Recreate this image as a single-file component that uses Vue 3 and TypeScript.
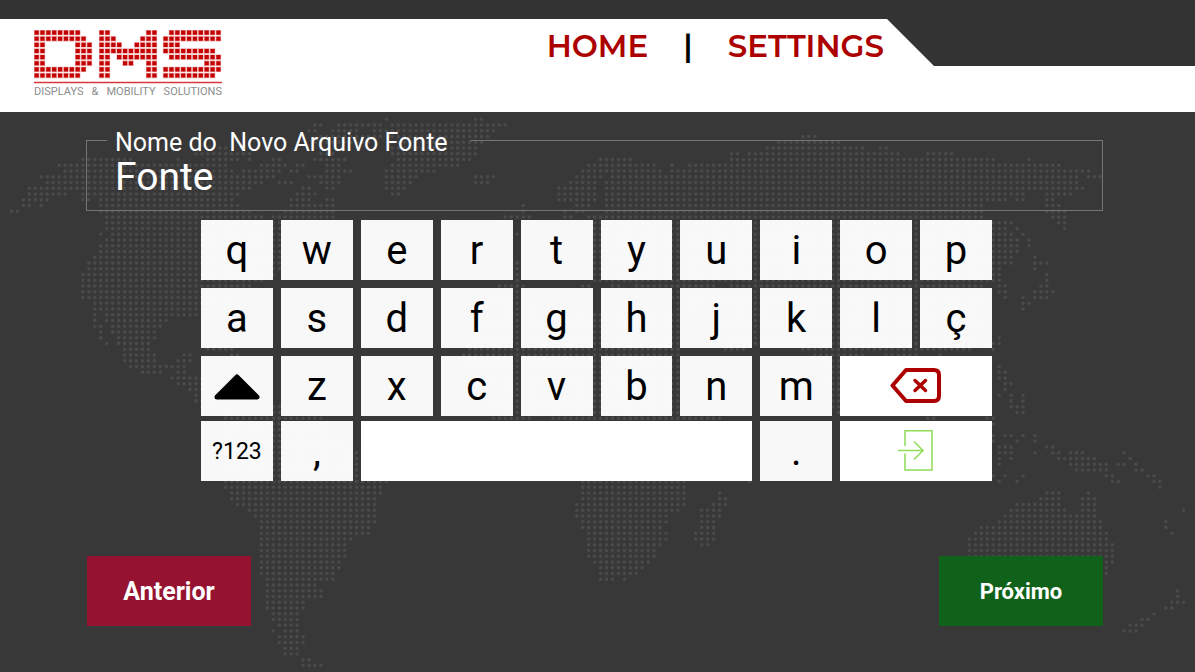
<script setup lang="ts">
import { ref } from 'vue'

type Key = { id: string; label?: string; span?: number; kind?: 'small' | 'space' | 'shift' | 'delete' | 'enter' }

const fileName = ref('Fonte')
const upper = ref(false)

const letters = (text: string): Key[] => [...text].map((c) => ({ id: c, label: c }))

const rows: Key[][] = [
  letters('qwertyuiop'),
  letters('asdfghjklç'),
  [{ id: 'Shift', kind: 'shift' }, ...letters('zxcvbnm'), { id: 'Apagar', kind: 'delete', span: 2 }],
  [
    { id: '?123', label: '?123', kind: 'small' },
    { id: ',', label: ',' },
    { id: 'Espaço', kind: 'space', span: 5 },
    { id: '.', label: '.' },
    { id: 'Enter', kind: 'enter', span: 2 },
  ],
]

function press(key: Key) {
  if (key.kind === 'shift') upper.value = !upper.value
  else if (key.kind === 'delete') fileName.value = fileName.value.slice(0, -1)
  else if (key.kind === 'space') fileName.value += ' '
  else if (!key.kind && key.label) fileName.value += upper.value ? key.label.toUpperCase() : key.label
}

// World map: one entry per dot row, each a list of column runs.
const mapRows: string[] = [
  '63 78-79',
  '51-52 55-62 64-83',
  '50-51 54-58 61-81',
  '52-62 64-80 133-135',
  '51-60 64-79 129-139',
  '35-36 64-78 127-143 146-147',
  '31-40 52-54 64-78 121-122 124-149 154-158',
  '12-20 28 33-38 40 44-45 51-56 65-77 99-104 121-165 171',
  '8-36 42-46 48-49 53-55 64-75 97-108 111 114-176',
  '9-37 39-45 47-48 53-57 63-71 96-109 111-181',
  '5-44 50-55 63-68 78-81 95-99 101-179 181-183',
  '6-42 45-47 52-55 63-67 78-80 94-98 100-179',
  '3-40 49-50 53-54 63-66 92-98 100-180',
  '3-9 12-38 48-51 64-65 92-98 100-170 174-178',
  '2-6 12-13 15-37 47-50 53-54 92-98 100-167 169-170 174-175',
  '2-3 5 15-38 47-54 86 95-97 100-163 174-176',
  '0-1 15-40 46-54 86 93 95-96 100-163 174-177',
  '16-42 44-54 83-87 93-94 97-163 175-177',
  '16-45 97-168 176-177',
  '16-46 97-167 169 177',
  '15 17-45 85 97-168 170',
  '16-45 97-169 171',
  '15-45 97-169 171',
  '15-45 97-169',
  '14-45 97-168 172',
  '13-45 85 97-168 172-174',
  '13-45 85 98-166 172',
  '12-44 85 98-166 174',
  '12-42 85 98-166 174',
  '12-40 82-86 96-97 101-102 105-118 121-163 166-167 173-174',
  '12-38 82-86 105-163 166-167 172-175',
  '12-37 81-87 105-163 167 170 172-174',
  '14-36 80-88 112-163 170-171',
  '14-33 79-90 112-163 170',
  '14 16-33 79-113 117-163',
  '14 16-26 78-113 117-163',
  '14-15 17-25 78-113 117-163',
  '15 17-24 78-113 117-162',
  '15 18-24 78-112 120-162 166',
  '16 18-23 77-112 120-162 165-166',
  '19-23 33-37 77-112 120-123 133-161 165',
  '19-24 29-30 37-38 76-112 135-143 147-152 156',
  '19-24 28-30 76-112 136-141',
  '20-29 76-112 136-141 166',
  '22-25 28-29 76-112 136-140 166-167',
  '27-33 76-112 137-139 166-167',
  '28-33 77-112 137-139 167-168',
  '30-34 77-112 138-139 167',
  '31-34 78-112 138-139 166 168 170',
  '31-35 79-112 138-139 168 170',
  '32-45 80-112 138-139 168-170',
  '34-48 81-113 139 169-170',
  '36-52 81-87 91-119 154-155 164-165',
  '36-53 91-118 165',
  '36-54 92-117',
  '36-55 93-116 165 167-168 170 172',
  '36-56 94-115 165 169 172',
  '36-57 95-114 166-168 174-175',
  '36-60 95-114 166-168 172 175-176 178-180 187',
  '36-62 96-114 166 168 176-182 188',
  '36-64 96-114 166 178-184 186-187 189',
  '36-65 96-114 179-184 189-190',
  '36-65 96-114 165 167 170 184-185 191-192',
  '36-63 96-113 124 166 169 185-186 192-193',
  '36-62 96-113 193',
  '37-62 96-113 119 174-176 181',
  '37-61 96-113 119-120 173-176 180-182',
  '38-61 95-113 118-120 169-176 180-182',
  '40-61 95-112 116-119 168-177 180-182 197',
  '41-61 95-110 116-119 167-182',
  '42-61 96-110 116-118 166-183 194',
  '42-60 96-109 116-118 163-183 194',
  '42-60 97-110 115-118 162-184 195',
  '42-57 97-110 115-118 161-184',
  '42-56 97-109 116-117 161-185',
  '42-56 97-108 161-185',
  '42-56 97-108 161-185',
  '42-55 98-107 161-185',
  '42-55 99-106 162-184',
  '42-54 99-105 184',
  '43-54 99-101 103',
  '43-51',
  '43-52 196',
  '43-52 196',
  '43-49 195-197',
  '43-49 194-195',
  '44-48 192',
  '44-48 190-191',
  '45-48 188-190',
  '44 46-48 187-189',
  '45-49',
  '45-49',
  '46-48',
  '46-48',
  '49-50',
  '49-52',
]

function dots(list: string[], x0: number, y0: number, dx: number, dy: number): string {
  let path = ''
  list.forEach((row, r) => {
    for (const run of row.split(' ')) {
      const [from, to = from] = run.split('-').map(Number)
      for (let c = from; c <= to; c++) path += `M${(x0 + c * dx).toFixed(2)} ${(y0 + r * dy).toFixed(2)}h.01`
    }
  })
  return path
}
const mapPath = dots(mapRows, 11.5, 119.2, 5.95, 5.75)

// DMS mark, built from square cells: one block of ten columns per letter.
const glyphs: { x: number; rows: string[] }[] = [
  { x: 0, rows: ['0-7', '0-8', '0-1 7-9', '0-1 7-9', '0-1 7-9', '0-1 7-9', '0-8', '0-7'] },
  { x: 65, rows: ['0-1 8-9', '0-2 7-9', '0-3 6-9', '0-9', '0-1 3-7 8-9', '0-1 4-5 8-9', '0-1 8-9', '0-1 8-9'] },
  { x: 129, rows: ['1-9', '0-9', '0-2', '0-8', '1-9', '7-9', '0-9', '0-8'] },
]
const logoPath = glyphs.map((g) => dots(g.rows, g.x + 2.6, 2.6, 5.87, 6.13)).join('')
</script>

<template>
  <div class="page">
    <svg class="map" viewBox="0 0 1195 672" aria-hidden="true">
      <path :d="mapPath" fill="none" stroke="#4a4a4a" stroke-width="3.6" stroke-linecap="round" />
    </svg>

    <header class="header">
      <div class="bar">
        <div class="logo">
          <svg class="mark" viewBox="0 0 188 54" role="img" aria-label="DMS">
            <path :d="logoPath" fill="none" stroke="#eda6a6" stroke-width="5.4" stroke-linecap="square" />
            <path :d="logoPath" fill="none" stroke="#c40000" stroke-width="4.2" stroke-linecap="square" />
            <path d="M0 52.5H188" stroke="#d9363b" stroke-width="1.4" />
          </svg>
          <div class="tagline"><span>DISPLAYS</span> <span>&amp;</span> <span>MOBILITY</span> <span>SOLUTIONS</span></div>
        </div>
        <nav class="nav">
          <a href="#home">HOME</a>
          <span class="sep">|</span>
          <a href="#settings">SETTINGS</a>
        </nav>
      </div>
    </header>

    <main class="content">
      <fieldset class="field">
        <legend><label for="file-name">Nome do&nbsp; Novo Arquivo Fonte</label></legend>
        <input id="file-name" v-model="fileName" type="text" />
      </fieldset>

      <div class="keyboard">
        <div v-for="(row, r) in rows" :key="r" class="row">
          <button
            v-for="key in row"
            :key="key.id"
            type="button"
            class="key"
            :class="[key.kind, key.span ? 'span-' + key.span : '']"
            :aria-label="key.label ? undefined : key.id"
            @click="press(key)"
          >
            <template v-if="key.label">{{ upper && !key.kind ? key.label.toUpperCase() : key.label }}</template>
            <svg v-else-if="key.kind === 'shift'" width="46" height="26" viewBox="0 0 46 26">
              <path d="M23 3L43 23H3Z" stroke="#000" stroke-width="5" stroke-linejoin="round" />
            </svg>
            <svg v-else-if="key.kind === 'delete'" width="52" height="36" viewBox="0 0 52 36" fill="none" stroke="#ad0000">
              <path d="M16 2H44Q49 2 49 7V28Q49 33 44 33H16L2.500 17.500Z" stroke-width="4" stroke-linejoin="round" />
              <path d="M25 12.500L35.500 22.500M35.500 12.500L25 22.500" stroke-width="3.400" stroke-linecap="round" />
            </svg>
            <svg v-else-if="key.kind === 'enter'" width="36" height="42" viewBox="0 0 36 42" fill="none" stroke="#8fdc58" stroke-width="1.500">
              <path d="M7 16V.800H34V40H7V23.500" />
              <path d="M0 20.500H25M16 11.500L25 20.500L16 29.500" />
            </svg>
          </button>
        </div>
      </div>

      <div class="actions">
        <button type="button" class="action prev">Anterior</button>
        <button type="button" class="action next">Próximo</button>
      </div>
    </main>
  </div>
</template>

<style>
body {
  margin: 0;
  background: #383838;
}
</style>

<style scoped>
.page {
  position: relative;
  box-sizing: border-box;
  min-height: 100vh;
  overflow: hidden;
  background: #383838;
  font-family: Roboto, "Liberation Sans", sans-serif;
}
.map {
  position: absolute;
  top: 0;
  left: 0;
  width: 100%;
}
.header {
  position: relative;
  padding-top: 19px;
  background: #333;
}
.bar {
  display: flex;
  justify-content: space-between;
  align-items: flex-start;
  box-sizing: border-box;
  height: 93px;
  padding: 10px 311px 0 34px;
  background: #fff;
  clip-path: polygon(0 0, calc(100% - 308px) 0, calc(100% - 261px) 47px, 100% 47px, 100% 100%, 0 100%);
}
.logo {
  width: 188px;
  padding-top: 1px;
}
.mark {
  display: block;
  width: 100%;
}
.tagline {
  display: flex;
  justify-content: space-between;
  font-size: 11px;
  line-height: 16px;
  color: #8c8c8c;
}
.nav {
  display: flex;
  align-items: center;
  gap: 35px;
  font-family: Montserrat, Inter, sans-serif;
  font-size: 31px;
  font-weight: 600;
  line-height: 34px;
}
.nav a {
  color: #ad0000;
  text-decoration: none;
}
.sep {
  color: #000;
}
.content {
  position: relative;
  padding: 11px 92px 0 87px;
}
.field {
  min-width: 0;
  margin: 0 0 9px -1px;
  padding: 0 28px 13px 20px;
  border: 1px solid #757575;
  color: #fff;
}
.field legend {
  padding: 6px 22px 0 8px;
  font-size: 25px;
  line-height: 28px;
}
.field input {
  display: block;
  box-sizing: border-box;
  width: 100%;
  height: 40px;
  padding: 0 8px;
  border: 0;
  outline: 0;
  background: transparent;
  color: inherit;
  font: inherit;
  font-size: 39px;
  line-height: 40px;
}
.keyboard {
  margin: 0 111px 0 114px;
}
.row {
  display: grid;
  grid-template-columns: repeat(10, 1fr);
  gap: 8px;
  margin-bottom: 8px;
}
.row:nth-child(3) {
  margin-bottom: 5px;
}
.row:last-child {
  margin-bottom: 0;
}
.key {
  display: flex;
  align-items: center;
  justify-content: center;
  min-width: 0;
  height: 60px;
  padding: 2px 0 0;
  border: 0;
  background: rgba(255, 255, 255, 0.97);
  color: #000;
  font: inherit;
  font-size: 40px;
  line-height: 48px;
}
.small {
  font-size: 23px;
}
.space,
.delete,
.enter {
  padding: 0;
  background: #fff;
}
.span-2 {
  grid-column: span 2;
}
.span-5 {
  grid-column: span 5;
}
.actions {
  display: flex;
  justify-content: space-between;
  margin-top: 75px;
}
.action {
  width: 164px;
  height: 70px;
  padding: 0;
  border: 0;
  color: #fff;
  font: inherit;
  font-weight: 700;
}
.prev {
  background: #951330;
  font-size: 25px;
}
.next {
  background: #10621b;
  font-size: 22px;
}
</style>
